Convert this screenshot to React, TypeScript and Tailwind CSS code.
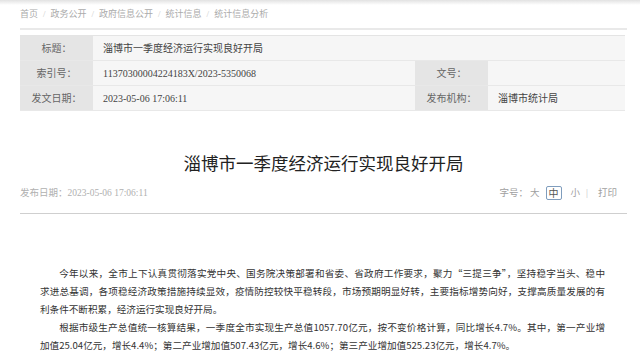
import React from "react";

const serif = "font-['Liberation_Serif','Noto_Sans_CJK_SC',serif]";
const sans = "font-['Noto_Sans_CJK_SC','Liberation_Sans',sans-serif]";

const crumbs = ["首页", "政务公开", "政府信息公开", "统计信息", "统计信息分析"];

// 본문: 원문 줄바꿈 그대로
const paragraphs: string[][] = [
  [
    "今年以来，全市上下认真贯彻落实党中央、国务院决策部署和省委、省政府工作要求，聚力“三提三争”，坚持稳字当头、稳中",
    "求进总基调，各项稳经济政策措施持续显效，疫情防控较快平稳转段，市场预期明显好转，主要指标增势向好，支撑高质量发展的有",
    "利条件不断积累，经济运行实现良好开局。",
  ],
  [
    "根据市级生产总值统一核算结果，一季度全市实现生产总值1057.70亿元，按不变价格计算，同比增长4.7%。其中，第一产业增",
    "加值25.04亿元，增长4.4%；第二产业增加值507.43亿元，增长4.6%；第三产业增加值525.23亿元，增长4.7%。",
  ],
];

const App: React.FC = () => {
  return (
    <div className="w-[640px] h-[358px] overflow-hidden bg-white">
      {/* 상단 그림자 */}
      <div className="h-[5px] bg-gradient-to-b from-[#e2e2e2] to-white" />

      <div className="pl-[20px] w-[627px]">
        {/* 경로 */}
        <nav className={`h-[20px] flex items-center text-[9px] text-[#ababab] ${serif}`}>
          {crumbs.map((c, i) => (
            <span key={c} className="flex items-center">
              {i > 0 && <span className="mx-[5px] text-[#cccccc]">/</span>}
              {c}
            </span>
          ))}
        </nav>
        <div className="mt-[3px] h-[2px] bg-[#e9e9e9]" />

        {/* 정보 표 */}
        <div className={`mt-[5px] w-[605px] border-t border-[#e4e4e4] text-[10px] ${serif}`}>
          <div className="flex h-[25px] border-b border-[#e8e8e8]">
            <div className="w-[73px] bg-[#e5e5e5] flex items-center justify-center text-[#666]">标题：</div>
            <div className="flex-1 bg-[#f6f6f6] flex items-center pl-[10px] text-[#444]">
              淄博市一季度经济运行实现良好开局
            </div>
          </div>
          <div className="flex h-[25px] border-b border-[#e8e8e8]">
            <div className="w-[73px] bg-[#e5e5e5] flex items-center justify-center text-[#666]">索引号：</div>
            <div className="w-[322px] bg-[#f6f6f6] flex items-center pl-[10px] text-[#444]">
              11370300004224183X/2023-5350068
            </div>
            <div className="w-[73px] bg-[#e5e5e5] flex items-center justify-center text-[#666]">文号：</div>
            <div className="flex-1 bg-[#f6f6f6]" />
          </div>
          <div className="flex h-[25px] border-b border-[#e8e8e8]">
            <div className="w-[73px] bg-[#e5e5e5] flex items-center justify-center text-[#666]">发文日期：</div>
            <div className="w-[322px] bg-[#f6f6f6] flex items-center pl-[10px] text-[#444]">
              2023-05-06 17:06:11
            </div>
            <div className="w-[73px] bg-[#e5e5e5] flex items-center justify-center text-[#666]">发布机构：</div>
            <div className="flex-1 bg-[#f6f6f6] flex items-center pl-[10px] text-[#444]">淄博市统计局</div>
          </div>
        </div>

        {/* 제목 */}
        <h1 className={`mt-[40px] h-[24px] leading-[24px] text-center text-[17.5px] font-normal text-[#222] ${sans}`}>
          淄博市一季度经济运行实现良好开局
        </h1>

        {/* 날짜 / 글자 크기 */}
        <div className={`mt-[10px] h-[16px] flex items-center justify-between text-[9.5px] ${serif}`}>
          <span className="text-[#b0b0b0]">发布日期：2023-05-06 17:06:11</span>
          <div className="flex items-center text-[#a0a0a0] pr-[10px]">
            <span>字号：</span>
            <span className="ml-[2px]">大</span>
            <span className="ml-[6px] w-[16px] h-[14px] flex items-center justify-center border border-[#7f9dbd] rounded-[2px] text-[10px] text-[#555]">
              中
            </span>
            <span className="ml-[9px]">小</span>
            <span className="ml-[6px] text-[#c0c0c0]">|</span>
            <span className="ml-[10px]">打印</span>
          </div>
        </div>
        <div className="mt-[12px] h-px bg-[#cfcfcf]" />

        {/* 본문 */}
        <div className={`mt-[50px] pl-[20px] pr-[22px] text-[9.6px] leading-[18px] text-[#333] ${sans}`}>
          {paragraphs.map((lines, p) => (
            <p key={p}>
              {lines.map((line, i) => (
                <span
                  key={i}
                  className={`block whitespace-nowrap ${i === 0 ? "pl-[2em]" : ""} ${
                    i < lines.length - 1 ? "text-justify [text-align-last:justify]" : ""
                  }`}
                >
                  {line}
                </span>
              ))}
            </p>
          ))}
        </div>
      </div>
    </div>
  );
};

export default App;
